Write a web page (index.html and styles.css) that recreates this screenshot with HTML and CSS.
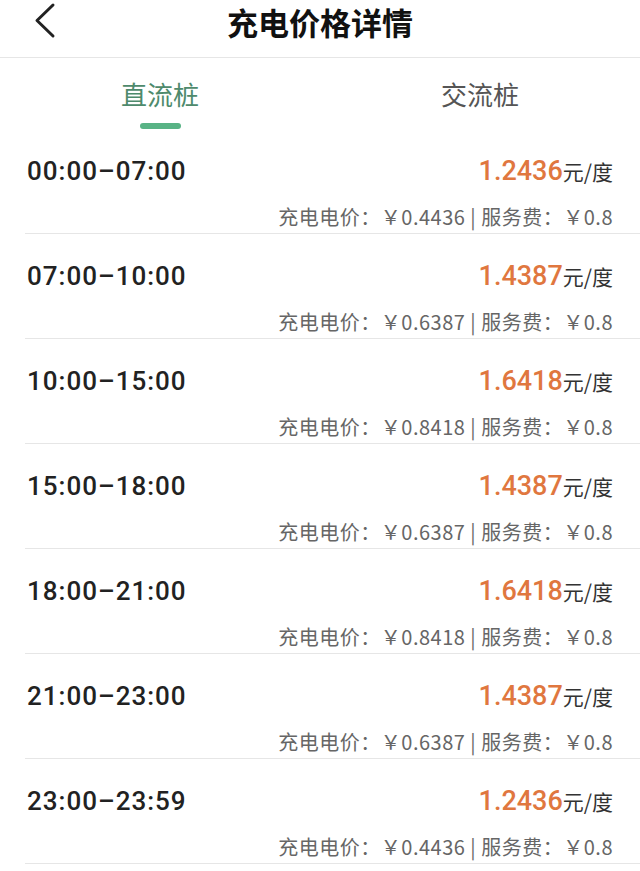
FILE: index.html
```html
<!DOCTYPE html>
<html lang="zh-CN">
<head>
<meta charset="UTF-8">
<meta name="viewport" content="width=device-width, initial-scale=1.0">
<title>充电价格详情</title>
<link rel="stylesheet" href="styles.css">
</head>
<body>

<div class="header">
<span class="back">
<svg width="24" height="40" viewBox="0 0 24 40"><path d="M19 4 L3 19.5 L19 35" fill="none" stroke="#222" stroke-width="3" stroke-linecap="round" stroke-linejoin="round"/></svg>
</span>
<p class="title">充电价格详情</p>
</div>

<div class="tabs">
<div class="tab active"><span>直流桩</span><i class="bar"></i></div>
<div class="tab"><span>交流桩</span><i class="bar"></i></div>
</div>

<div class="list">
<div class="row">
<div class="line">
<span class="time">00:00–07:00</span>
<span class="price"><b>1.2436</b>元/度</span>
</div>
<p class="detail">充电电价：￥0.4436 | 服务费：￥0.8</p>
</div>

<div class="row">
<div class="line">
<span class="time">07:00–10:00</span>
<span class="price"><b>1.4387</b>元/度</span>
</div>
<p class="detail">充电电价：￥0.6387 | 服务费：￥0.8</p>
</div>

<div class="row">
<div class="line">
<span class="time">10:00–15:00</span>
<span class="price"><b>1.6418</b>元/度</span>
</div>
<p class="detail">充电电价：￥0.8418 | 服务费：￥0.8</p>
</div>

<div class="row">
<div class="line">
<span class="time">15:00–18:00</span>
<span class="price"><b>1.4387</b>元/度</span>
</div>
<p class="detail">充电电价：￥0.6387 | 服务费：￥0.8</p>
</div>

<div class="row">
<div class="line">
<span class="time">18:00–21:00</span>
<span class="price"><b>1.6418</b>元/度</span>
</div>
<p class="detail">充电电价：￥0.8418 | 服务费：￥0.8</p>
</div>

<div class="row">
<div class="line">
<span class="time">21:00–23:00</span>
<span class="price"><b>1.4387</b>元/度</span>
</div>
<p class="detail">充电电价：￥0.6387 | 服务费：￥0.8</p>
</div>

<div class="row">
<div class="line">
<span class="time">23:00–23:59</span>
<span class="price"><b>1.2436</b>元/度</span>
</div>
<p class="detail">充电电价：￥0.4436 | 服务费：￥0.8</p>
</div>
</div>

</body>
</html>
```

FILE: styles.css
```css
body {
    margin: 0;
    background-color: #fff;
    font-family: "Roboto", "Noto Sans CJK SC", sans-serif;
    color: #222;
}

.header {
    position: relative;
    height: 57px;
    border-bottom: 1px solid #e6e6e6;
    display: flex;
    justify-content: center;
}
.back {
    position: absolute;
    left: 34px;
    top: 1px;
}
.title {
    margin: 0;
    padding-top: 3px;
    font-family: "Noto Sans CJK SC", sans-serif;
    font-size: 31px;
    font-weight: 700;
    line-height: 38px;
    color: #111;
}

.tabs {
    display: flex;
    height: 71px;
}
.tab {
    flex: 1;
    display: flex;
    flex-direction: column;
    align-items: center;
    padding-top: 19px;
    font-family: "Noto Sans CJK SC", sans-serif;
    font-size: 26px;
    line-height: 34px;
    color: #555;
}
.tab .bar {
    width: 41px;
    height: 6px;
    margin-top: 12px;
    border-radius: 3px;
}
.tab.active span {
    color: #4e8a6c;
}
.tab.active .bar {
    background-color: #58b385;
}

.row {
    box-sizing: border-box;
    height: 105px;
    margin-left: 25px;
    padding: 26px 27px 0 2px;
    border-bottom: 1px solid #e6e6e6;
}
.line {
    display: flex;
    justify-content: space-between;
    align-items: baseline;
    height: 30px;
}
.time {
    font-size: 26px;
    font-weight: 500;
    letter-spacing: 1px;
    line-height: 30px;
    color: #222;
}
.price {
    font-family: "Noto Sans CJK SC", sans-serif;
    font-size: 21px;
    color: #333;
}
.price b {
    font-family: "Roboto", sans-serif;
    font-size: 27px;
    font-weight: 500;
    color: #e0773f;
}
.detail {
    margin: 19px 0 0;
    text-align: right;
    font-family: "Noto Sans CJK SC", sans-serif;
    font-size: 20px;
    letter-spacing: 0.5px;
    line-height: 26px;
    color: #666;
}
```
